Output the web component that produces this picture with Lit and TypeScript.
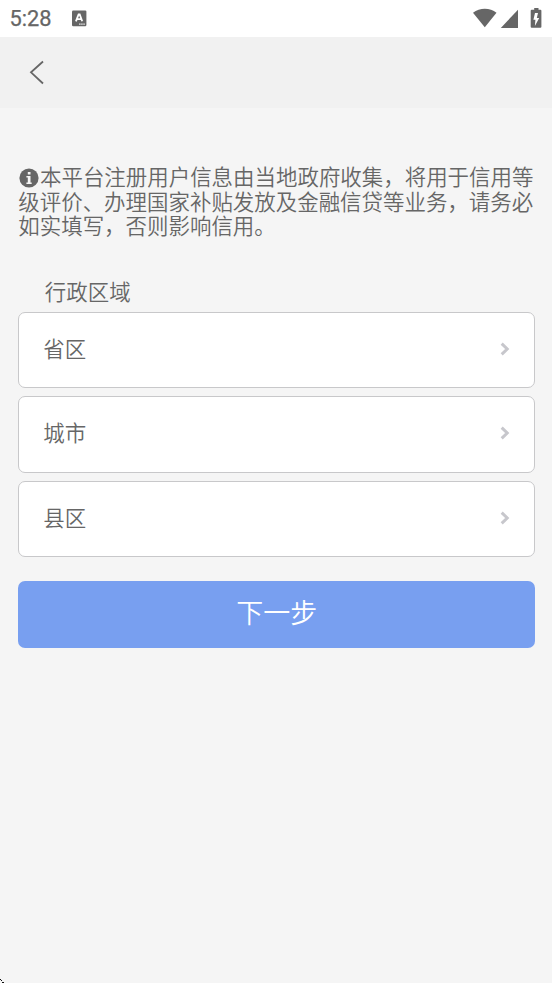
import { LitElement, html, css } from "lit";
import { customElement } from "lit/decorators.js";

@customElement("status-bar")
class StatusBar extends LitElement {
  static styles = css`
    :host { display: flex; box-sizing: border-box; height: 37px; padding: 0 10px 0 9.5px; background: #fff; color: #666; align-items: center; }
    .time { font: 400 21.8px/38px Roboto, sans-serif; width: 62.5px; box-sizing: border-box; height: 37px; -webkit-text-stroke: 0.25px #666; }
    svg { display: block; fill: #666; }
    .spacer { flex: 1; }
  `;
  render() {
    return html`
      <span class="time">5:28</span>
      <svg width="15" height="17" viewBox="0 0 15 17">
        <rect x="0" y="0.6" width="14.4" height="15.6" rx="1.2" />
        <path d="M3.9 11.3 6.6 4.5h1.1l2.5 6.8M5 9.2h4.3" fill="none" stroke="#fff" stroke-width="1.8" />
        <path d="M7.2 13.5h1.3v1.3H7.2zM9.3 13.5h1.3v1.3H9.3zM11.4 13.5h1.3v1.3h-1.3z" fill="#fff" />
      </svg>
      <span class="spacer"></span>
      <svg width="71" height="37" viewBox="0 0 71 37">
        <path d="M2 12.8C8.7 7.5 19 7.5 25.5 12.8L13.8 27.2Z" />
        <path d="M47 9.7V28H29.8Z" />
        <path d="M63.2 8h4.3v1.8h1.9q1 0 1 1v16q0 1-1 1h-8.7q-1 0-1-1v-16q0-1 1-1h2.5Z" />
        <path d="M64 13h3l-1.2 5h2.4l-4.3 8 .5-6.2h-2Z" fill="#fff" />
      </svg>
    `;
  }
}

@customElement("region-field")
class RegionField extends LitElement {
  static properties = { label: {} };
  declare label: string;
  static styles = css`
    :host { display: flex; box-sizing: border-box; height: 76.5px; padding: 0 24.5px 0 24px; align-items: center; justify-content: space-between; background: #fff; border: 1px solid #c8c8ca; border-radius: 7px; }
    .label { line-height: 30px; padding-bottom: 4px; }
    svg { display: block; margin-bottom: 2px; }
  `;
  render() {
    return html`
      <span class="label">${this.label}</span>
      <svg width="10" height="14" viewBox="0 0 10 14"><path d="M1.7 1.7 7.2 7 1.7 12.3" fill="none" stroke="#c7c7cc" stroke-width="3" /></svg>
    `;
  }
}

@customElement("app-root")
class AppRoot extends LitElement {
  static styles = css`
    :host { display: flex; flex-direction: column; position: relative; height: 983px; overflow: hidden; background: #f5f5f5; color: #666; font: 350 21.46px/24.5px "Noto Sans CJK SC", sans-serif; }
    .nav { height: 71px; box-sizing: border-box; padding: 23px 0 0 29px; background: #f1f1f1; }
    .nav svg, .info, .corner { display: block; }
    main { display: flex; flex-direction: column; padding: 56px 17px 0 18.3px; }
    .line { display: flex; align-items: center; white-space: nowrap; height: 24.5px; }
    .info { margin-right: 0.7px; margin-top: 4px; }
    .section { margin: 38.5px 0 5.5px 26.5px; line-height: 30px; height: 30px; }
    .fields { display: flex; flex-direction: column; gap: 8px; }
    .next { margin-top: 23.5px; height: 67.5px; padding: 0 0 4px; border: 0; border-radius: 7px; background: #789ff0; color: #fff; font: 350 27px/40px "Noto Sans CJK SC", sans-serif; }
    .corner { position: absolute; left: 0; bottom: 0; }
  `;
  render() {
    return html`
      <status-bar></status-bar>
      <div class="nav">
        <svg width="16" height="25" viewBox="0 0 16 25"><path d="M14 1.5 2 12.3 14 23.5" fill="none" stroke="#666" stroke-width="1.8" /></svg>
      </div>
      <main>
        <div class="line">
          <svg class="info" width="21" height="20" viewBox="0 0 21 20">
            <circle cx="11" cy="10" r="9.6" fill="#666" />
            <path d="M9.8 4h2.7v2.6H9.8zM8.4 8h4.1v6.4h1.2v1.5H8.4v-1.5h1.4V9.5H8.4Z" fill="#f5f5f5" />
          </svg>
          <span>本平台注册用户信息由当地政府收集，将用于信用等</span>
        </div>
        <div class="line">级评价、办理国家补贴发放及金融信贷等业务，请务必</div>
        <div class="line">如实填写，否则影响信用。</div>
        <div class="section">行政区域</div>
        <div class="fields">
          ${["省区", "城市", "县区"].map((name) => html`<region-field .label=${name}></region-field>`)}
        </div>
        <button class="next">下一步</button>
      </main>
      <svg class="corner" width="4" height="4" viewBox="0 0 4 4"><path d="M0 0h1v1H0zM1 1h1v1H1zM2 3h2v1H2z" fill="#111" /></svg>
    `;
  }
}
